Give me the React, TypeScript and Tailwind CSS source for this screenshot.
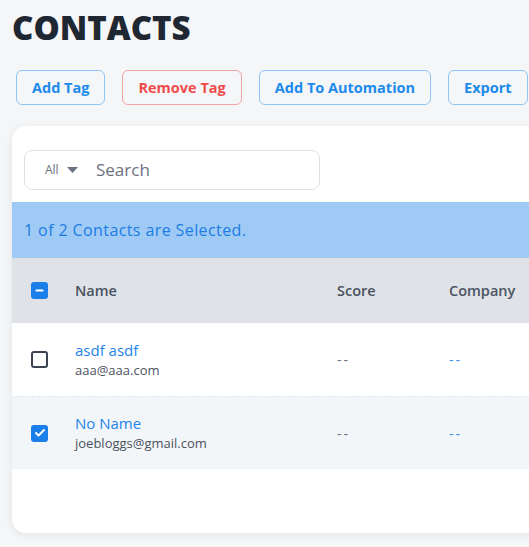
import { Check, Minus } from 'lucide-react'

const font = { fontFamily: '"Open Sans", "Noto Sans", sans-serif' }

type Contact = { name: string; email: string; selected: boolean }

const contacts: Contact[] = [
  { name: 'asdf asdf', email: 'aaa@aaa.com', selected: false },
  { name: 'No Name', email: 'joebloggs@gmail.com', selected: true },
]

const cols = 'grid grid-cols-[63px_262px_112px_1fr] items-center'

function Checkbox({ state }: { state: 'on' | 'off' | 'some' }) {
  if (state === 'off') {
    return <div className="w-[17px] h-[17px] rounded-[3px] border-2 border-[#3d4451] bg-white" />
  }
  return (
    <div className="w-[17px] h-[17px] rounded-[3px] bg-[#1a7fe8] flex items-center justify-center">
      {state === 'on' ? (
        <Check size={12} strokeWidth={4} className="text-white" />
      ) : (
        <Minus size={11} strokeWidth={4} className="text-white" />
      )}
    </div>
  )
}

function ToolButton({ label, danger }: { label: string; danger?: boolean }) {
  return (
    <button
      className={
        danger
          ? 'h-[35px] px-[15px] rounded-[6px] border border-[#f4a3a3] text-[#f04b4b] text-[14.5px] font-bold bg-transparent'
          : 'h-[35px] px-[15px] rounded-[6px] border border-[#8fc5f4] text-[#1d8aee] text-[14.5px] font-bold bg-transparent'
      }
    >
      {label}
    </button>
  )
}

export default function App() {
  return (
    <div className="w-screen h-screen overflow-hidden bg-[#f4f6f8]" style={font}>
      <div className="pl-[12px] pt-[8px]">
        <h1 className="text-[33px] leading-[40px] font-extrabold text-[#1f2732]">CONTACTS</h1>
      </div>

      <div className="flex gap-[17px] pl-[16px] mt-[22px] w-[700px]">
        <ToolButton label="Add Tag" />
        <ToolButton label="Remove Tag" danger />
        <ToolButton label="Add To Automation" />
        <ToolButton label="Export" />
      </div>

      <div className="ml-[12px] mt-[21px] w-[720px] bg-white rounded-[14px] shadow-[0_2px_8px_rgba(0,0,0,0.08)] pt-[24px] pb-[64px]">
        <div className="pl-[12px]">
          <div className="w-[296px] h-[40px] rounded-[8px] border border-[#dde0e4] flex items-center">
            <div className="flex items-center pl-[20px] w-[71px] text-[12px] text-[#6b7280]">
              All
              <svg width="11" height="6" viewBox="0 0 11 6" className="ml-[8px]">
                <path d="M0 0 L11 0 L5.5 6 Z" fill="#6b7280" />
              </svg>
            </div>
            <span className="text-[17px] text-[#6b7280]">Search</span>
          </div>
        </div>

        <div className="mt-[12px] h-[56px] bg-[#9fcaf6] flex items-center pl-[12px] text-[16px] tracking-[0.4px] text-[#1b7de2]">
          1 of 2 Contacts are Selected.
        </div>

        <div className={`h-[65px] bg-[#dfe2e7] ${cols} text-[14.5px] font-semibold text-[#4a5360]`}>
          <div className="pl-[19px]">
            <Checkbox state="some" />
          </div>
          <div>Name</div>
          <div>Score</div>
          <div>Company</div>
        </div>

        {contacts.map((c, i) => (
          <div
            key={c.email}
            className={
              i === 0
                ? `h-[73px] bg-white ${cols}`
                : `h-[73px] bg-[#f3f6f9] border-t border-dashed border-[#e6e9ed] ${cols}`
            }
          >
            <div className="pl-[19px]">
              <Checkbox state={c.selected ? 'on' : 'off'} />
            </div>
            <div className="flex flex-col">
              <span className="text-[15px] leading-[21px] text-[#2385ea]">{c.name}</span>
              <span className="text-[13px] leading-[19px] text-[#4b5260]">{c.email}</span>
            </div>
            <div className="text-[14px] tracking-[2px] text-[#6b7280]">--</div>
            <div className="text-[14px] tracking-[2px] text-[#3d8fea]">--</div>
          </div>
        ))}
      </div>
    </div>
  )
}
